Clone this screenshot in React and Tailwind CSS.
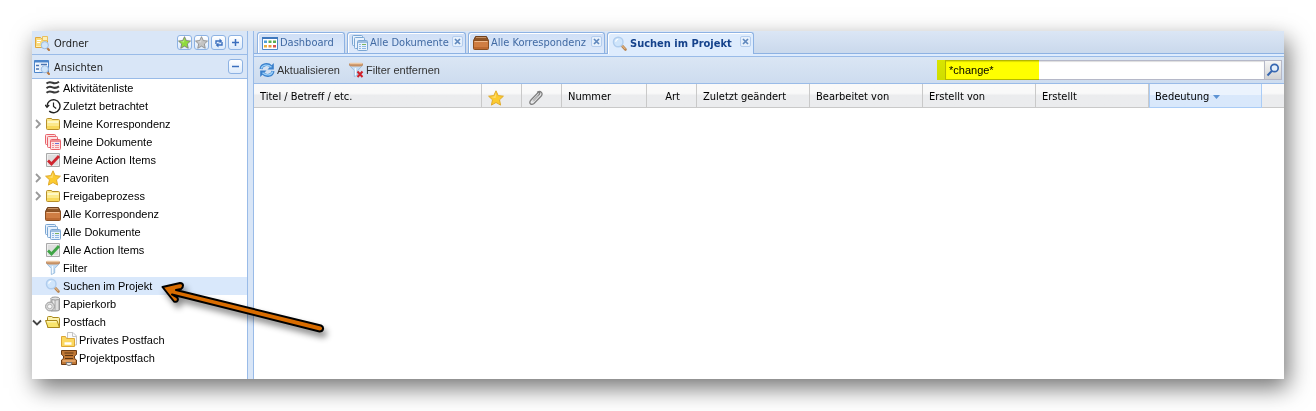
import { useState } from 'react';
import clsx from 'clsx';

/* ---------- Icons ---------- */

function Icon({ children, className }) {
  return (
    <svg viewBox="0 0 16 16" className={clsx('h-4 w-4 shrink-0', className)} fill="none" aria-hidden="true">
      {children}
    </svg>
  );
}

function Magnifier() {
  return (
    <>
      <path d="M9.800 9.500l3.700 4" stroke="#b98654" strokeWidth="2.600" strokeLinecap="round" />
      <path d="M10 9.500l3 3.200" stroke="#f0c692" strokeWidth="1" strokeLinecap="round" />
      <circle cx="6.200" cy="6" r="4.800" fill="#cfe5fb" stroke="#b0cdee" strokeWidth="1.400" />
      <path d="M3.600 5.600a3 3 0 0 1 2.600-2.400" stroke="#fff" strokeWidth="1.300" />
    </>
  );
}

function MiniMagnifier() {
  return (
    <>
      <path d="M12.800 12.800l2.200 2.200" stroke="#b9763c" strokeWidth="2" strokeLinecap="round" />
      <circle cx="10.800" cy="10.200" r="3.600" fill="#cfe5fa" stroke="#9dbbe0" />
    </>
  );
}

const SearchIcon = () => (
  <Icon>
    <Magnifier />
  </Icon>
);

const FolderSearchIcon = () => (
  <Icon>
    <path d="M1.500 2.500h5l1 1h6v9h-12z" fill="#fbdc7c" stroke="#e0a63c" />
    <path d="M3 5.500h4M3 7.500h3" stroke="#fff" />
    <path d="M8.500 1.500h5v4h-5z" fill="#fdf0b8" stroke="#e8c060" />
    <path d="M2 11.500h7" stroke="#fff0b0" />
    <MiniMagnifier />
  </Icon>
);

const ViewSearchIcon = () => (
  <Icon>
    <path d="M.5 1.500h14v12H.5z" fill="#f4f9ff" stroke="#4d86cb" />
    <path d="M.5 2.500h14" stroke="#4d86cb" strokeWidth="2" />
    <path d="M2 6.500h3M2 10h3M7 5.500h6" stroke="#4a74b0" strokeWidth="1.300" />
    <path d="M6 4v9" stroke="#cfe0f4" />
    <MiniMagnifier />
  </Icon>
);

const ActivityIcon = () => (
  <Icon>
    <path
      d="M1.500 3.600c2.500-2.200 4-1.600 6-.8s4 .8 6.500-1M1.500 8.200c2.500-2.200 4-1.600 6-.8s4 .8 6.500-1M1.500 12.800c2.500-2.200 4-1.600 6-.8s4 .8 6.500-1"
      stroke="#3a3a3a"
      strokeWidth="2"
    />
  </Icon>
);

const HistoryIcon = () => (
  <Icon>
    <path d="M2 8.500a6.500 6.500 0 1 1 2.200 4.600" stroke="#222" strokeWidth="1.400" />
    <path d="M0 6.800l2 2.400 2.200-2.200" stroke="#222" strokeWidth="1.300" />
    <path d="M8.500 4.500V8.500l2.700 2" stroke="#222" strokeWidth="1.200" />
  </Icon>
);

const FolderIcon = () => (
  <Icon>
    <path d="M1.500 3.500q0-1 1-1h3.500q1 0 1.200 1h6.300q1 0 1 1v8q0 1-1 1h-11q-1 0-1-1z" fill="#fce98c" stroke="#b8902a" />
    <path d="M2.500 6h11" stroke="#fffbd8" strokeWidth="1.500" />
    <path d="M2 10h12v3H2z" fill="#f8d95c" />
  </Icon>
);

const FolderOpenIcon = () => (
  <Icon>
    <path d="M2.500 13.500v-10q0-1 1-1h3q1 0 1.200 1h5.800q1 0 1 1v9" fill="#fdf3b0" stroke="#a9891c" />
    <path d="M.5 6.500h11.500l2.500 7H3z" fill="#f9e56c" stroke="#a9891c" strokeLinejoin="round" />
    <path d="M2 7.800h9.500" stroke="#fffbd0" />
  </Icon>
);

function DocsIcon({ red }) {
  const line = red ? '#e8636b' : '#7ba6d2';
  const fill = red ? '#fde3e4' : '#e8f2fd';
  return (
    <Icon>
      <g stroke={line} fill={fill}>
        <rect x=".5" y=".5" width="10" height="10" rx="1" />
        <rect x="2.500" y="2.500" width="10" height="11" rx="1" />
        <rect x="5.500" y="5.500" width="10" height="10" rx="1" />
      </g>
      <path d="M6 7h9" stroke={line} strokeWidth="1.400" />
      <path d="M10 9.500h4" stroke={red ? '#6c6fd0' : '#79b25d'} />
      <path d="M7 9.500h2M7 11.500h2M10 11.500h4M7 13.500h2M10 13.500h4" stroke={red ? '#f08f96' : '#8fb8e2'} />
    </Icon>
  );
}

function CheckIcon({ color }) {
  return (
    <Icon>
      <path d="M1.500 1.500h13v13h-13z" fill="#dedede" stroke="#a9a9a9" />
      <path d="M2.500 2.500h11v11h-11z" stroke="#efefef" />
      <path d="M3 8.500l3.500 3.500L14 4" stroke={color} strokeWidth="2.800" />
    </Icon>
  );
}

function StarIcon({ fill = '#fccb2f', stroke = '#e0aa2c', className }) {
  return (
    <Icon className={className}>
      <path
        d="M8 .8l2.200 4.800 5.200.6-3.900 3.600 1.100 5.300L8 12.500l-4.600 2.600 1.100-5.300L.6 6.200l5.200-.6z"
        fill={fill}
        stroke={stroke}
        strokeLinejoin="round"
      />
      <path d="M8 2.500L6.500 6.500 3 7l4.500 1z" fill="#fff" fillOpacity=".4" />
    </Icon>
  );
}

const BoxIcon = () => (
  <Icon>
    <path d="M2.500 1.500h11l2 4H.5z" fill="#8f5527" stroke="#6f4220" strokeLinejoin="round" />
    <path d="M3 2.500h10" stroke="#c79264" />
    <path d="M.5 5.500h15v8q0 1-1 1h-13q-1 0-1-1z" fill="#cf7d43" stroke="#8a4f22" />
    <path d="M1.500 6.500h13" stroke="#efb98c" />
    <path d="M1 12h14v2H1z" fill="#bd6a32" />
  </Icon>
);

function Funnel() {
  return (
    <>
      <path d="M1.500 3.500L6.300 8.500v6l3.400-1.500V8.500l4.800-5z" fill="#c4dcf3" stroke="#9dbfe0" />
      <path d="M7.500 6v7.500" stroke="#f5fbff" strokeWidth="1.300" />
      <path d="M1 1.500h14q.5 3-3 3H4q-3.500 0-3-3z" fill="#c69063" />
      <path d="M2 1.500h12" stroke="#ecc9a4" strokeWidth="1.500" />
    </>
  );
}

const FilterIcon = () => (
  <Icon>
    <Funnel />
  </Icon>
);

const FilterRemoveIcon = () => (
  <Icon>
    <Funnel />
    <path d="M9.500 9.500l5 5.500M14.500 9.500l-5 5.500" stroke="#d0202a" strokeWidth="2" />
  </Icon>
);

const TrashIcon = () => (
  <Icon>
    <path d="M6 2.500h8.500V14q-1 1-3.500 1H6z" fill="#c0c0c0" stroke="#989898" />
    <path d="M8.500 4v10" stroke="#e9e9e9" strokeWidth="1.500" />
    <path d="M12 4v10" stroke="#efefef" strokeWidth="1.300" />
    <ellipse cx="10.200" cy="2.500" rx="4.300" ry="1.500" fill="#e2e2e2" stroke="#989898" />
    <circle cx="5" cy="10.500" r="4.400" fill="#dcdcdc" stroke="#999" />
    <circle cx="4.800" cy="10.500" r="2.300" fill="#f6f6f6" stroke="#b4b4b4" />
  </Icon>
);

const PrivateInboxIcon = () => (
  <Icon>
    <path d="M6.500.5h5.500l3.500 3.500v9h-9z" fill="#fafafa" stroke="#c4c4c4" />
    <path d="M11.500.5v4h4" stroke="#c4c4c4" />
    <path d="M.5 4.500h4l1 2h8v8H.5z" fill="#fbd860" stroke="#dca636" />
    <path d="M3.500 11.500h7" stroke="#fff" strokeWidth="2.500" />
  </Icon>
);

const ProjectInboxIcon = () => (
  <Icon>
    <path d="M.5.500h15v4l-2 1.500v2.500l2 1.500v4.500H.5V10l2-1.500V6L.5 4.500z" fill="#c07835" stroke="#6b3b14" />
    <path d="M3.500 3h9M4 5.500h8M4 8.500h8" stroke="#5c3412" strokeWidth="1.200" />
    <path d="M1.500 11h13" stroke="#eeb47a" strokeWidth="1.400" />
    <path d="M5 12.500q0 3 3 3t3-3z" fill="#ececec" stroke="#777" />
  </Icon>
);

const DashboardIcon = () => (
  <Icon>
    <path d="M.5 2.500h15v12H.5z" fill="#fff" stroke="#4f87c7" />
    <path d="M0 3h16" stroke="#3f78bd" strokeWidth="2" />
    <path d="M2 5.500h3V8H2z" fill="#4c9fd8" />
    <path d="M6.500 5.500h3V8h-3z" fill="#5cae4f" />
    <path d="M11 5.500h3V8h-3z" fill="#5cae4f" />
    <path d="M2 10h3v2.500H2z" fill="#e8b13c" />
    <path d="M6.500 10h3v2.500h-3z" fill="#ea9138" />
    <path d="M11 10h3v2.500h-3z" fill="#d9534f" />
  </Icon>
);

const RefreshIcon = () => (
  <Icon>
    <g stroke="#3a80cc" strokeWidth="3">
      <path d="M2 7C2.500 2 9 1.500 12 4.500" />
      <path d="M14 9c-.5 5-7 5.500-10 2.500" />
    </g>
    <path d="M14.800 1v6.500H8.500z" fill="#3a80cc" />
    <path d="M1.200 15V8.500h6.300z" fill="#3a80cc" />
    <g stroke="#9bd0fa" strokeWidth="1.400">
      <path d="M2.300 6.500C3.500 2.500 9 2 12.500 5.300" />
      <path d="M13.700 9.500c-1.200 4-6.700 4.500-10.200 1.200" />
    </g>
  </Icon>
);

const ClipIcon = () => (
  <Icon>
    <path
      d="M5.500 10.500L11 4.700q1.200-1 .6-1.800T9.700 3L3 10q-2 2.400-.6 3.800T6 13.500L13.200 6q1.600-2 .2-3.600T9.500 2"
      stroke="#7f7f7f"
      strokeWidth="1.300"
      strokeLinecap="round"
    />
    <path d="M4.500 11.500L10 5.500" stroke="#c9c9c9" />
  </Icon>
);

const SwapGlyph = () => (
  <svg viewBox="0 0 10 10" className="h-[10px] w-[10px]" fill="none" stroke="#3a6ebd" strokeWidth="1.400" aria-hidden="true">
    <path d="M2 6V3h4M8 4v3H4" />
    <path d="M5.500.600L8.300 3 5.500 5.400zM4.500 4.600L1.700 7l2.800 2.400z" fill="#3a6ebd" stroke="none" />
  </svg>
);

/* ---------- Data ---------- */

const treeItems = [
  { label: 'Aktivitätenliste', icon: <ActivityIcon /> },
  { label: 'Zuletzt betrachtet', icon: <HistoryIcon /> },
  { label: 'Meine Korrespondenz', icon: <FolderIcon />, arrow: 'closed' },
  { label: 'Meine Dokumente', icon: <DocsIcon red /> },
  { label: 'Meine Action Items', icon: <CheckIcon color="#cf2630" /> },
  { label: 'Favoriten', icon: <StarIcon />, arrow: 'closed' },
  { label: 'Freigabeprozess', icon: <FolderIcon />, arrow: 'closed' },
  { label: 'Alle Korrespondenz', icon: <BoxIcon /> },
  { label: 'Alle Dokumente', icon: <DocsIcon /> },
  { label: 'Alle Action Items', icon: <CheckIcon color="#3fa546" /> },
  { label: 'Filter', icon: <FilterIcon /> },
  { label: 'Suchen im Projekt', icon: <SearchIcon /> },
  { label: 'Papierkorb', icon: <TrashIcon /> },
  { label: 'Postfach', icon: <FolderOpenIcon />, arrow: 'open' },
  { label: 'Privates Postfach', icon: <PrivateInboxIcon />, child: true },
  { label: 'Projektpostfach', icon: <ProjectInboxIcon />, child: true },
];

const tabs = [
  { label: 'Dashboard', icon: <DashboardIcon />, width: 'w-[88px]' },
  { label: 'Alle Dokumente', icon: <DocsIcon />, width: 'w-[119px]', closable: true },
  { label: 'Alle Korrespondenz', icon: <BoxIcon />, width: 'w-[137px]', closable: true },
  { label: 'Suchen im Projekt', icon: <SearchIcon />, width: 'w-[147px]', closable: true },
];

const columns = [
  { label: 'Titel / Betreff / etc.' },
  { icon: <StarIcon />, name: 'Favorit', width: 'w-10' },
  { icon: <ClipIcon />, name: 'Anhang', width: 'w-10' },
  { label: 'Nummer', width: 'w-[85px]' },
  { label: 'Art', width: 'w-[50px]', right: true },
  { label: 'Zuletzt geändert', width: 'w-[113px]' },
  { label: 'Bearbeitet von', width: 'w-[113px]' },
  { label: 'Erstellt von', width: 'w-[113px]' },
  { label: 'Erstellt', width: 'w-[113px]' },
  { label: 'Bedeutung', width: 'w-[113px]', sorted: true },
];

/* ---------- Sidebar ---------- */

function ToolButton({ label, children }) {
  return (
    <button
      aria-label={label}
      className="flex h-[15px] w-[15px] items-center justify-center rounded-[3px] border border-[#8db2e3] bg-linear-to-b from-white to-[#dceafb]"
    >
      {children}
    </button>
  );
}

function PanelHeader({ icon, title, children }) {
  return (
    <div className="flex h-6 items-center border-b border-[#99bbe8] bg-[#d9e6f7] pr-1 pl-[2px]">
      {icon}
      <h2 className="ml-1 flex-1 pt-[3px] font-['DejaVu_Sans_Condensed','Noto_Sans',sans-serif] text-[11px] text-[#222]">
        {title}
      </h2>
      <div className="flex gap-[2px]">{children}</div>
    </div>
  );
}

function TreeItem({ item, selected, onSelect }) {
  return (
    <li>
      <button
        onClick={onSelect}
        className={clsx('flex h-[18px] w-full items-center text-left', item.child && 'pl-4', selected && 'bg-[#d9e8fb]')}
      >
        <span className="w-[13px] shrink-0">
          {item.arrow && (
            <svg viewBox="0 0 10 10" className="h-[10px] w-[10px]" fill="none" strokeWidth="1.800" aria-hidden="true">
              {item.arrow === 'open' ? (
                <path d="M1 3.500l4 4 4-4" stroke="#444" />
              ) : (
                <path d="M4 1l4 4-4 4" stroke="#999" />
              )}
            </svg>
          )}
        </span>
        {item.icon}
        <span className="ml-[2px]">{item.label}</span>
      </button>
    </li>
  );
}

function Sidebar() {
  const [selected, setSelected] = useState('Suchen im Projekt');

  return (
    <aside className="w-[216px] shrink-0 border-r border-[#99bbe8] bg-white pb-3">
      <PanelHeader icon={<FolderSearchIcon />} title="Ordner">
        <ToolButton label="Zu Favoriten hinzufügen">
          <StarIcon fill="#8fdb3c" stroke="#777" className="h-[13px] w-[13px]" />
        </ToolButton>
        <ToolButton label="Aus Favoriten entfernen">
          <StarIcon fill="#c4c4c4" stroke="#888" className="h-[13px] w-[13px]" />
        </ToolButton>
        <ToolButton label="Ordner aktualisieren">
          <SwapGlyph />
        </ToolButton>
        <ToolButton label="Ordner öffnen">
          <svg viewBox="0 0 9 9" className="h-[9px] w-[9px]" stroke="#3a6ebd" strokeWidth="1.500" aria-hidden="true">
            <path d="M1 4.500h7M4.500 1v7" />
          </svg>
        </ToolButton>
      </PanelHeader>
      <PanelHeader icon={<ViewSearchIcon />} title="Ansichten">
        <ToolButton label="Ansichten schließen">
          <svg viewBox="0 0 9 9" className="h-[9px] w-[9px]" stroke="#3a6ebd" strokeWidth="1.500" aria-hidden="true">
            <path d="M1 4.500h7" />
          </svg>
        </ToolButton>
      </PanelHeader>
      <ul>
        {treeItems.map((item) => (
          <TreeItem
            key={item.label}
            item={item}
            selected={selected === item.label}
            onSelect={() => setSelected(item.label)}
          />
        ))}
      </ul>
    </aside>
  );
}

/* ---------- Main area ---------- */

function Tab({ tab, active, onSelect }) {
  return (
    <div
      className={clsx(
        'flex justify-between rounded-t-[3px] border border-b-0 border-[#8db2e3] pr-[2px] pl-1 shadow-[inset_1px_1px_0_#fff]',
        tab.width,
        active ? '-mb-px bg-[#deecfd]' : 'bg-linear-to-b from-[#cfdff6] to-[#deeafb]'
      )}
    >
      <button
        onClick={onSelect}
        className={clsx(
          'flex items-center gap-[2px] whitespace-nowrap',
          active ? 'font-bold text-[#15428b]' : 'text-[#416aa3]'
        )}
      >
        {tab.icon}
        <span className="pt-px">{tab.label}</span>
      </button>
      {tab.closable && (
        <button
          aria-label={`${tab.label} schließen`}
          className="mt-[3px] flex h-[11px] w-[11px] shrink-0 items-center justify-center rounded-[2px] border border-[#b4cdee] bg-[#e6f0fc]"
        >
          <svg viewBox="0 0 7 7" className="h-[7px] w-[7px]" stroke="#5f88bd" strokeWidth="1.700" aria-hidden="true">
            <path d="M1 1l5 5M6 1L1 6" />
          </svg>
        </button>
      )}
    </div>
  );
}

function Toolbar() {
  const [query, setQuery] = useState('*change*');

  return (
    <div className="flex h-[27px] items-center border-b border-[#99bbe8] bg-linear-to-b from-[#dae6f4] to-[#cddcef] pr-[2px] pl-[5px] text-[#333]">
      <button className="flex items-center gap-[2px]">
        <RefreshIcon />
        Aktualisieren
      </button>
      <button className="ml-2 flex items-center gap-[2px]">
        <FilterRemoveIcon />
        Filter entfernen
      </button>
      <div className="relative ml-auto flex h-5 w-[337px]">
        <input
          aria-label="Suche"
          value={query}
          onChange={(e) => setQuery(e.target.value)}
          className="min-w-0 flex-1 border border-[#b5b8c8] bg-white px-[3px] text-black shadow-[inset_0_1px_1px_#ddd] outline-none"
        />
        <button
          aria-label="Suchen"
          className="flex w-[17px] items-center justify-center border border-l-0 border-[#b5b8c8] bg-linear-to-b from-[#f5f5f5] to-[#d3d3d3]"
        >
          <svg viewBox="0 0 14 14" className="h-[14px] w-[14px]" fill="none" stroke="#3767b1" aria-hidden="true">
            <circle cx="8.500" cy="5" r="3.700" strokeWidth="1.700" fill="#e4effb" />
            <path d="M5.800 8L1.500 12.500" strokeWidth="2" />
          </svg>
        </button>
        <div className="pointer-events-none absolute inset-y-0 -left-2 w-[102px] bg-[#ff0] mix-blend-multiply" />
      </div>
    </div>
  );
}

function ResultTable() {
  return (
    <table className="w-full table-fixed border-separate border-spacing-0 font-['DejaVu_Sans_Condensed','Noto_Sans',sans-serif]">
      <thead>
        <tr className="h-6">
          {columns.map((col) => (
            <th
              key={col.label || col.name}
              aria-label={col.name}
              className={clsx(
                'border-r border-b px-[6px] pt-1 pb-0 font-normal whitespace-nowrap text-black',
                col.width,
                col.right ? 'pr-4 text-right' : 'text-left',
                col.sorted
                  ? 'border-[#aaccf6] bg-linear-to-b from-[#ebf3fd] from-50% to-[#d9e8fb] to-50% shadow-[inset_1px_0_0_#aaccf6]'
                  : 'border-[#c9c9c9] bg-linear-to-b from-[#f9f9f9] from-40% to-[#ebecee] to-50%'
              )}
            >
              {col.icon}
              {col.label}
              {col.sorted && (
                <svg viewBox="0 0 7 4" className="ml-1 inline h-1 w-[7px]" fill="#5d93d3" aria-hidden="true">
                  <path d="M0 0h7L3.500 4z" />
                </svg>
              )}
            </th>
          ))}
          <td className="w-[22px] border-b border-[#c9c9c9] bg-linear-to-b from-[#f9f9f9] from-40% to-[#ebecee] to-50%" />
        </tr>
      </thead>
    </table>
  );
}

function MainArea() {
  const [active, setActive] = useState('Suchen im Projekt');

  return (
    <main className="min-w-0 flex-1 border-l border-[#99bbe8] bg-white">
      <nav className="flex h-[23px] gap-[2px] border-b border-[#8db2e3] bg-linear-to-b from-[#dbe6f5] to-[#cad9ec] pt-px pl-[3px] font-['DejaVu_Sans_Condensed','Noto_Sans',sans-serif]">
        {tabs.map((tab) => (
          <Tab key={tab.label} tab={tab} active={active === tab.label} onSelect={() => setActive(tab.label)} />
        ))}
      </nav>
      <div className="h-[3px] border-b border-[#99bbe8] bg-[#deecfd]" />
      <Toolbar />
      <ResultTable />
    </main>
  );
}

function PointerArrow() {
  return (
    <svg
      viewBox="0 0 180 60"
      className="pointer-events-none absolute top-[247px] left-[124px] h-[60px] w-[180px] drop-shadow-[3px_5px_3px_rgba(0,0,0,0.45)]"
      aria-hidden="true"
    >
      <path
        d="M6.500 9L24 5q3 0 3 2.500T25 11l-5 1 145 35.500q2.500 1 2 3.500t-3.500 2.500L16 16.500l5 3q1.500 1.500.5 3.200t-3.500.8z"
        fill="#d96c00"
        stroke="#000"
        strokeWidth="2"
        strokeLinejoin="round"
      />
    </svg>
  );
}

export default function App() {
  return (
    <div className="bg-white px-8 pt-[31px] pb-8 font-['Liberation_Sans',Arial,sans-serif] text-[11px] text-black">
      <div className="relative flex bg-[#d9e6f7] shadow-[4px_9px_22px_rgba(0,0,0,0.55)]">
        <Sidebar />
        <div className="w-[5px] shrink-0" />
        <MainArea />
        <PointerArrow />
      </div>
    </div>
  );
}
